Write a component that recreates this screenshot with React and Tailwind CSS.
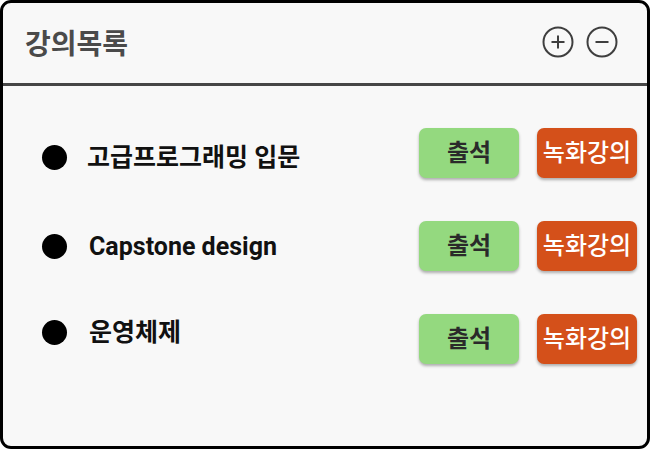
import React from "react";

const font = { fontFamily: "Roboto, 'Noto Sans CJK KR', sans-serif" };

function CircleIcon({ minus }) {
  return (
    <svg width="32" height="32" viewBox="0 0 32 32" fill="none" stroke="#3f3f3f" strokeWidth="2">
      <circle cx="16" cy="16" r="14.5" />
      <line x1="9.5" y1="16" x2="22.5" y2="16" />
      {!minus && <line x1="16" y1="9.5" x2="16" y2="22.5" />}
    </svg>
  );
}

function Row({ name, leftClass, rowClass }) {
  return (
    <div className={"flex items-center " + rowClass}>
      <div className={"flex items-center flex-1 " + leftClass}>
        <div className="w-[25px] h-[25px] rounded-full bg-black ml-[39px]" />
        <div className="ml-[20px] text-[25px] font-bold text-[#111] leading-none">{name}</div>
      </div>
      <div className="w-[100px] h-[50px] rounded-[7px] bg-[#94d97f] shadow-[0_2px_3px_rgba(0,0,0,0.3)] flex items-center justify-center text-[24px] font-bold text-[#2a2a2a]">
        출석
      </div>
      <div className="ml-[18px] mr-[10px] w-[100px] h-[50px] rounded-[7px] bg-[#d4501a] shadow-[0_2px_3px_rgba(0,0,0,0.3)] flex items-center justify-center text-[24px] font-medium text-white whitespace-nowrap -mt-[1px]">
        녹화강의
      </div>
    </div>
  );
}

export default function App() {
  return (
    <div className="w-[651px] h-[450px] bg-white" style={font}>
      <div className="w-[650px] h-[449px] border-[3px] border-black rounded-[11px] bg-[#f8f8f8] flex flex-col overflow-hidden">
        <div className="h-[83px] shrink-0 flex items-center border-b-[3px] border-[#464646]">
          <div className="ml-[22px] mt-[4px] text-[28px] font-bold text-[#4a4a4a] leading-none">강의목록</div>
          <div className="ml-auto mr-[29px] flex items-center gap-[12px] -mt-[3px]">
            <CircleIcon />
            <CircleIcon minus />
          </div>
        </div>
        <div className="flex flex-col pt-[42px]">
          <Row name="고급프로그래밍 입문" rowClass="h-[50px]" leftClass="mt-[9px]" />
          <Row name={<span className="ml-[2px]">Capstone design</span>} rowClass="h-[50px] mt-[43px]" leftClass="" />
          <Row name={<span className="ml-[2px]">운영체제</span>} rowClass="h-[50px] mt-[43px]" leftClass="-mt-[14px]" />
        </div>
      </div>
    </div>
  );
}
